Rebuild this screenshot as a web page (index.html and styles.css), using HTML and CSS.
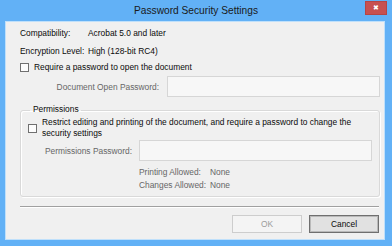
FILE: index.html
```html
<!DOCTYPE html>
<html lang="en">

<head>
    <meta charset="UTF-8">
    <meta name="viewport" content="width=device-width, initial-scale=1.0">
    <title>Password Security Settings</title>
    <link rel="stylesheet" href="styles.css">
</head>

<body>
    <div class="window">
        <div class="titlebar">
            <span></span>
            <span class="title">Password Security Settings</span>
            <span class="close">&#x2716;</span>
        </div>
        <div class="client">
            <div class="info-row first">
                <span class="info-label">Compatibility:</span>
                <span>Acrobat 5.0 and later</span>
            </div>
            <div class="info-row">
                <span class="info-label">Encryption Level:</span>
                <span>High (128-bit RC4)</span>
            </div>
            <label class="check-row">
                <span class="box"></span>
                <span>Require a password to open the document</span>
            </label>
            <div class="field-row">
                <span class="field-label open-label">Document Open Password:</span>
                <span class="input"></span>
            </div>

            <fieldset class="group">
                <legend>Permissions</legend>
                <label class="check-row restrict">
                    <span class="box"></span>
                    <span>Restrict editing and printing of the document, and require a password to change the security settings</span>
                </label>
                <div class="field-row perm-row">
                    <span class="field-label perm-label">Permissions Password:</span>
                    <span class="input"></span>
                </div>
                <div class="allowed">
                    <div class="allowed-row first">
                        <span class="allowed-label">Printing Allowed:</span>
                        <span>None</span>
                    </div>
                    <div class="allowed-row">
                        <span class="allowed-label">Changes Allowed:</span>
                        <span>None</span>
                    </div>
                </div>
            </fieldset>

            <div class="separator"></div>

            <div class="buttons">
                <button class="btn" disabled>OK</button>
                <button class="btn default">Cancel</button>
            </div>
        </div>
    </div>
</body>

</html>
```

FILE: styles.css
```css
html,
body {
    margin: 0;
    padding: 0;
}

body {
    font-family: "Liberation Sans", Arial, sans-serif;
    font-size: 8.4px;
    color: #0a0a0a;
    background: #62b1f6;
}

.window {
    width: 392px;
    height: 246px;
    box-sizing: border-box;
    padding: 0 7px 6px 5px;
    background: #62b1f6;
}

.titlebar {
    display: grid;
    grid-template-columns: 1fr auto 1fr;
    align-items: start;
    height: 21px;
    margin: 0 -7px 0 -5px;
    padding-top: 1px;
    box-sizing: border-box;
}

.title {
    font-size: 10.2px;
    line-height: 20px;
    color: #1a1a1a;
}

.close {
    justify-self: end;
    margin-right: 5px;
    width: 22px;
    height: 14px;
    box-sizing: border-box;
    border: 1px solid #b54545;
    background: #c75050;
    color: #fff;
    font-size: 7px;
    line-height: 12px;
    text-align: center;
}

.client {
    height: 219px;
    box-sizing: border-box;
    border: 1px solid #bfe0fb;
    background: #f0f0f0;
    padding: 5px 4px 0 14px;
}

.info-row {
    display: flex;
    line-height: 12px;
    margin-top: 6px;
}

.info-row.first {
    margin-top: 0;
}

.info-label {
    width: 68px;
}

.check-row {
    display: flex;
    align-items: center;
    gap: 5px;
    line-height: 12px;
    margin-top: 4px;
}

.box {
    flex: none;
    width: 9px;
    height: 9px;
    box-sizing: border-box;
    border: 1px solid #707070;
    background: #fdfdfd;
}

.field-row {
    display: flex;
    align-items: center;
    margin-top: 3px;
}

.field-label {
    color: #666;
    text-align: right;
    line-height: 12px;
}

.open-label {
    width: 139px;
    margin-right: 8px;
}

.input {
    flex: 1;
    height: 21px;
    box-sizing: border-box;
    border: 1px solid #d6d6d6;
    background: #f7f7f7;
}

.group {
    margin: 6px 1px 0 0;
    padding: 0 7px 4px 7px;
    border: 1px solid #d9d9d9;
    border-radius: 3px;
    box-shadow: inset 1px 1px 0 #fff, 1px 1px 0 #fff;
}

.group legend {
    padding: 0 2px 2px 3px;
    margin-left: 2px;
    line-height: 12px;
}

.restrict {
    margin-top: 0;
    line-height: 11px;
}

.perm-row {
    margin-top: 1px;
}

.perm-label {
    width: 104px;
    margin-right: 7px;
}

.perm-row .input {
    flex: none;
    width: 233px;
}

.allowed {
    margin-top: 5px;
    padding-left: 111px;
    color: #666;
}

.allowed-row {
    display: flex;
    line-height: 13px;
}

.allowed-label {
    width: 71px;
}

.separator {
    margin: 9px 1px 0 0;
    height: 1px;
    background: #a0a0a0;
    border-bottom: 1px solid #fff;
}

.buttons {
    display: flex;
    justify-content: flex-end;
    gap: 7px;
    margin: 7px 1px 0 0;
}

.btn {
    width: 70px;
    height: 18px;
    box-sizing: border-box;
    padding: 0;
    font-family: "Liberation Sans", Arial, sans-serif;
    font-size: 8.4px;
    border: 1px solid #cdcdcd;
    background: #f4f4f4;
    color: #9c9c9c;
    border-radius: 0;
}

.btn.default {
    border: 1px solid #6f6f6f;
    box-shadow: inset 0 0 0 1px #b9b9b9;
    background: #e1e1e1;
    color: #0a0a0a;
}
```
